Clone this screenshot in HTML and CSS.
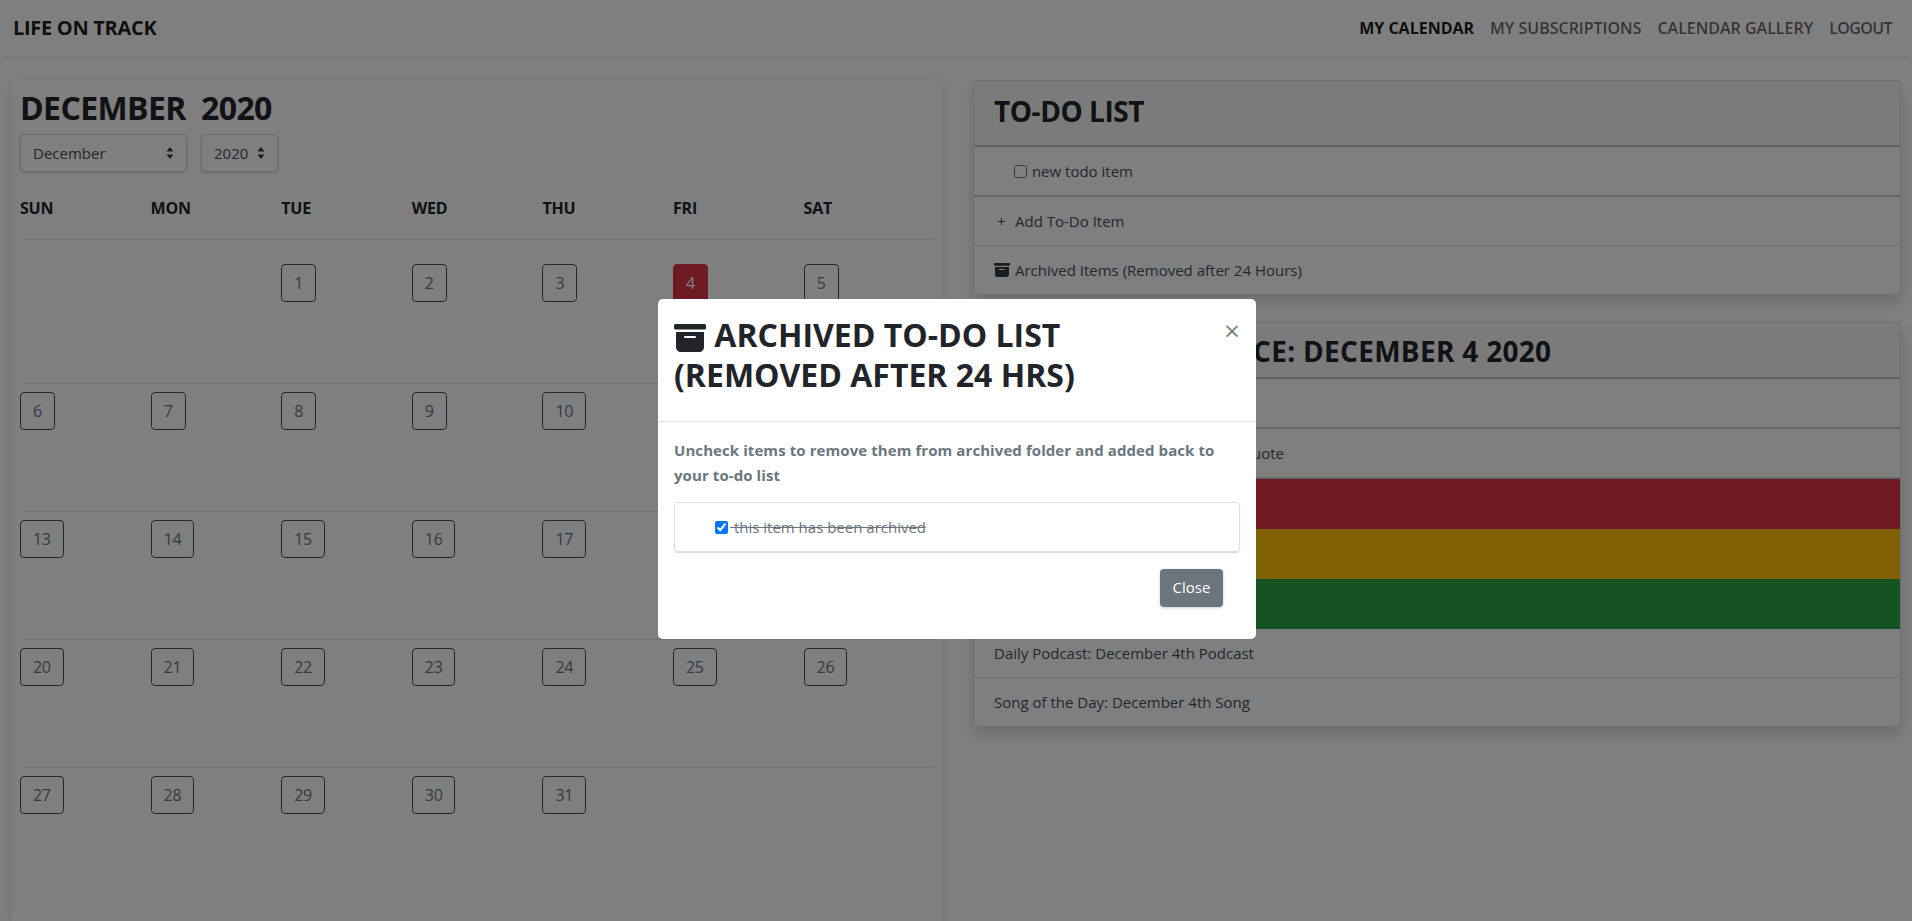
FILE: index.html
```html
<!DOCTYPE html>
<html lang="en">
  <head>
    <meta charset="UTF-8" />
    <title>Life On Track</title>
    <link rel="stylesheet" href="styles.css">
  </head>
  <body>
    <nav class="navbar">
      <a href="#" class="brand">LIFE ON TRACK</a>
      <div class="nav-links">
        <a href="#" class="active">MY CALENDAR</a>
        <a href="#">MY SUBSCRIPTIONS</a>
        <a href="#">CALENDAR GALLERY</a>
        <a href="#">LOGOUT</a>
      </div>
    </nav>

    <main class="page">
      <section class="calendar">
        <div class="month-head">
          <div class="month-col month-wide">
            <h2>DECEMBER</h2>
            <select class="picker picker-month"><option>December</option></select>
          </div>
          <div class="month-col">
            <h2>2020</h2>
            <select class="picker picker-year"><option>2020</option></select>
          </div>
        </div>
        <div class="days">
          <b>SUN</b><b>MON</b><b>TUE</b><b>WED</b><b>THU</b><b>FRI</b><b>SAT</b>
        </div>
        <div class="week first-week">
          <div></div><div></div>
          <div><a class="day">1</a></div><div><a class="day">2</a></div><div><a class="day">3</a></div>
          <div><a class="day today">4</a></div><div><a class="day">5</a></div>
        </div>
        <div class="week">
          <div><a class="day">6</a></div><div><a class="day">7</a></div><div><a class="day">8</a></div>
          <div><a class="day">9</a></div><div><a class="day">10</a></div><div><a class="day">11</a></div>
          <div><a class="day">12</a></div>
        </div>
        <div class="week">
          <div><a class="day">13</a></div><div><a class="day">14</a></div><div><a class="day">15</a></div>
          <div><a class="day">16</a></div><div><a class="day">17</a></div><div><a class="day">18</a></div>
          <div><a class="day">19</a></div>
        </div>
        <div class="week">
          <div><a class="day">20</a></div><div><a class="day">21</a></div><div><a class="day">22</a></div>
          <div><a class="day">23</a></div><div><a class="day">24</a></div><div><a class="day">25</a></div>
          <div><a class="day">26</a></div>
        </div>
        <div class="week">
          <div><a class="day">27</a></div><div><a class="day">28</a></div><div><a class="day">29</a></div>
          <div><a class="day">30</a></div><div><a class="day">31</a></div>
        </div>
      </section>

      <div class="side">
        <section class="card">
          <h2 class="card-head">TO-DO LIST</h2>
          <div class="item item-check thick"><label><input type="checkbox" /> new todo item</label></div>
          <div class="item"><span class="item-icon plus">+</span>Add To-Do Item</div>
          <div class="item">
            <span class="item-icon">
              <svg viewBox="0 0 16 16" width="16" height="16"><path d="M12.643 15C13.979 15 15 13.845 15 12.5V5H1v7.5C1 13.845 2.021 15 3.357 15h9.286zM5.500 7h5a.5.5 0 0 1 0 1h-5a.5.5 0 0 1 0-1zM.8 1a.8.8 0 0 0-.8.8V3a.8.8 0 0 0 .8.8h14.400A.8.8 0 0 0 16 3V1.800a.8.8 0 0 0-.8-.8H.8z"/></svg>
            </span>Archived Items (Removed after 24 Hours)
          </div>
        </section>

        <section class="card">
          <h2 class="card-head">MY DAILY GUIDANCE: DECEMBER 4 2020</h2>
          <div class="item thick">Daily Goal</div>
          <div class="item thick">Inspirational Quote: December 4th Quote</div>
          <div class="item band red"></div>
          <div class="item band yellow"></div>
          <div class="item band green"></div>
          <div class="item">Daily Podcast: December 4th Podcast</div>
          <div class="item">Song of the Day: December 4th Song</div>
        </section>
      </div>
    </main>

    <div class="backdrop"></div>
    <div class="modal">
      <div class="modal-box">
        <div class="modal-head">
          <h2>
            <svg viewBox="0 0 16 16" width="32" height="32"><path d="M12.643 15C13.979 15 15 13.845 15 12.5V5H1v7.5C1 13.845 2.021 15 3.357 15h9.286zM5.500 7h5a.5.5 0 0 1 0 1h-5a.5.5 0 0 1 0-1zM.8 1a.8.8 0 0 0-.8.8V3a.8.8 0 0 0 .8.8h14.400A.8.8 0 0 0 16 3V1.800a.8.8 0 0 0-.8-.8H.8z"/></svg>
            ARCHIVED TO-DO LIST<br />(REMOVED AFTER 24 HRS)
          </h2>
          <a href="#" class="close">×</a>
        </div>
        <div class="modal-body">
          <p>Uncheck items to remove them from archived folder and added back to your to-do list</p>
          <div class="archived">
            <label><input type="checkbox" checked /> this item has been archived</label>
          </div>
        </div>
        <div class="modal-foot">
          <a href="#" class="btn">Close</a>
        </div>
      </div>
    </div>
  </body>
</html>
```

FILE: styles.css
```css
* {
  box-sizing: border-box;
  margin: 0;
  padding: 0;
}
html,
body {
  height: 921px;
  overflow: hidden;
}
body {
  font-family: "Open Sans", "Noto Sans", sans-serif;
  font-size: 16px;
  line-height: 24px;
  color: #212529;
  background: #fff;
}
a {
  text-decoration: none;
  color: inherit;
}
h2 {
  font-size: 32px;
  line-height: 40px;
  font-weight: 700;
  letter-spacing: -0.6px;
}
.navbar {
  display: flex;
  align-items: center;
  justify-content: space-between;
  height: 56px;
  padding: 0 20px 0 13px;
  box-shadow: 0 2px 6px rgba(0, 0, 0, 0.08);
}
.brand {
  font-size: 20px;
  font-weight: 700;
  letter-spacing: -0.3px;
  color: rgba(0, 0, 0, 0.9);
}
.nav-links {
  display: flex;
  gap: 16px;
}
.nav-links a {
  font-size: 16px;
  font-weight: 600;
  color: rgba(0, 0, 0, 0.6);
}
.nav-links .active {
  font-weight: 700;
  color: rgba(0, 0, 0, 0.9);
}
.nav-links a:last-child {
  letter-spacing: -0.6px;
}
.page {
  display: flex;
  gap: 31px;
  height: 865px;
  padding: 24px 11px 0 12px;
  overflow: hidden;
}
.calendar {
  width: 930px;
  padding: 8px;
  flex: none;
  box-shadow: 0 4px 12px rgba(0, 0, 0, 0.15);
}
.month-head {
  display: flex;
  gap: 14px;
}
.month-col h2 {
  margin-bottom: 6px;
}
.month-wide {
  width: 167px;
}
.picker {
  display: block;
  height: 38px;
  padding: 0 12px;
  font-family: inherit;
  font-size: 15px;
  color: #495057;
  background: #fff;
  border: 1px solid #ced4da;
  border-radius: 4px;
  box-shadow: 0 1px 3px rgba(0, 0, 0, 0.15);
  appearance: none;
}
.picker-month {
  width: 167px;
  background: #fff url("data:image/svg+xml,%3Csvg xmlns='http://www.w3.org/2000/svg' width='8' height='14'%3E%3Cpath fill='%23343a40' d='M4 1 7.500 5.500H.5zM4 13 .5 8.500h7z'/%3E%3C/svg%3E") no-repeat right 12px center;
}
.picker-year {
  width: 77px;
  background: #fff url("data:image/svg+xml,%3Csvg xmlns='http://www.w3.org/2000/svg' width='8' height='14'%3E%3Cpath fill='%23343a40' d='M4 1 7.500 5.500H.5zM4 13 .5 8.500h7z'/%3E%3C/svg%3E") no-repeat right 12px center;
}
.days,
.week {
  display: grid;
  grid-template-columns: repeat(7, 130.6px);
}
.days {
  padding-top: 24px;
  height: 67px;
  letter-spacing: -0.2px;
}
.days b {
  line-height: 24px;
}
.week {
  height: 128px;
  padding-top: 8px;
  border-top: 1px solid rgba(0, 0, 0, 0.1);
}
.first-week {
  height: 144px;
  padding-top: 24px;
}
.day {
  display: inline-block;
  height: 38px;
  min-width: 35px;
  padding: 6px 12px;
  letter-spacing: -0.3px;
  color: #6c757d;
  border: 1px solid #495057;
  border-radius: 4px;
  text-align: center;
}
.today {
  color: #fff;
  background: #dc3545;
  border-color: #dc3545;
}
.side {
  flex: 1;
  display: flex;
  flex-direction: column;
  gap: 27px;
}
.card {
  border: 1px solid rgba(0, 0, 0, 0.125);
  border-radius: 4px;
  box-shadow: 0 8px 16px rgba(0, 0, 0, 0.15);
}
.card-head {
  height: 66px;
  padding: 10px 20px;
  font-size: 28px;
  line-height: 40px;
  letter-spacing: -0.45px;
  background: rgba(0, 0, 0, 0.03);
  border-bottom: 2px solid rgba(0, 0, 0, 0.2);
}
.card + .card .card-head {
  height: 56px;
  padding-top: 8px;
  letter-spacing: 0.3px;
}
.item {
  display: flex;
  align-items: center;
  height: 49px;
  padding: 0 20px;
  font-size: 15px;
  color: #495057;
  border-bottom: 1px solid rgba(0, 0, 0, 0.125);
}
.item:last-child {
  height: 48px;
  border-bottom: 0;
}
.thick {
  height: 50px;
  border-bottom-width: 2px;
  border-bottom-color: rgba(0, 0, 0, 0.2);
}
.item-check {
  padding-left: 40px;
}
.item-check input {
  margin-right: 1px;
  vertical-align: -1px;
}
.item-icon {
  display: flex;
  width: 21px;
  flex: none;
}
.item-icon svg {
  fill: #343a40;
}
.plus {
  padding-left: 3px;
}
.band {
  height: 50px;
  border-bottom: 0;
}
.red {
  background: #dc3545;
}
.yellow {
  background: #ffc107;
}
.green {
  background: #28a745;
}
.backdrop {
  position: fixed;
  top: 0;
  left: 0;
  width: 100%;
  height: 100%;
  background: rgba(0, 0, 0, 0.5);
}
.modal {
  position: fixed;
  top: 0;
  left: 0;
  width: 100%;
  height: 100%;
  display: flex;
  justify-content: center;
  align-items: flex-start;
  padding: 299px 0 0 2px;
}
.modal-box {
  width: 598px;
  height: 340px;
  background: #fff;
  border-radius: 5px;
}
.modal-head {
  display: flex;
  justify-content: space-between;
  height: 123px;
  padding: 16px;
  border-bottom: 1px solid #dee2e6;
}
.modal-head h2 {
  letter-spacing: 0;
}
.modal-head svg {
  fill: #212529;
  vertical-align: -7px;
}
.close {
  font-size: 28px;
  font-weight: 400;
  line-height: 30px;
  color: rgba(0, 0, 0, 0.5);
}
.modal-body {
  padding: 16px 16px 0;
}
.modal-body p {
  height: 64px;
  padding-right: 20px;
  font-size: 15px;
  line-height: 25px;
  font-weight: 700;
  letter-spacing: 0.08px;
  color: #6c757d;
}
.archived {
  height: 50px;
  padding: 12px 40px;
  font-size: 15px;
  color: #6c757d;
  text-decoration: line-through;
  border: 1px solid #dfdfdf;
  border-radius: 4px;
  box-shadow: 0 1px 1px rgba(0, 0, 0, 0.15);
}
.archived input {
  margin-right: 2px;
  vertical-align: -1px;
}
.modal-foot {
  display: flex;
  justify-content: flex-end;
  padding: 17px 33px 0;
}
.btn {
  width: 63px;
  height: 38px;
  font-size: 15px;
  line-height: 37px;
  text-align: center;
  color: #fff;
  background: #6c757d;
  border-radius: 4px;
  box-shadow: 0 1px 3px rgba(0, 0, 0, 0.2);
}
```
